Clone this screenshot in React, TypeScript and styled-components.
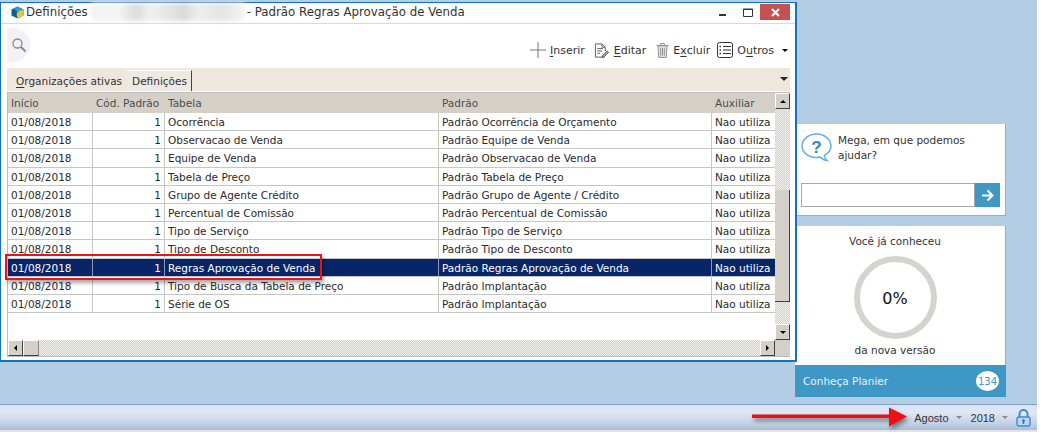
import React from "react";
import styled, { createGlobalStyle, css } from "styled-components";

const GlobalStyle = createGlobalStyle`
  html, body {
    margin: 0;
    padding: 0;
    background: #fff;
  }
  body {
    font-family: "DejaVu Sans", sans-serif;
    font-size: 10.5px;
    color: #222;
    overflow: hidden;
  }
`;

const COLUMNS = "85px 72px 274px 273px 63px";

const checker = css`
  background-color: #f0efec;
  background-image:
    linear-gradient(45deg, #d4d0c8 25%, transparent 25%, transparent 75%, #d4d0c8 75%),
    linear-gradient(45deg, #d4d0c8 25%, transparent 25%, transparent 75%, #d4d0c8 75%);
  background-size: 2px 2px;
  background-position: 0 0, 1px 1px;
`;

const Page = styled.div`
  position: relative;
  width: 1043px;
  height: 434px;
  overflow: hidden;
`;

const Desktop = styled.div`
  display: flex;
  align-items: flex-start;
  width: 1037px;
  height: 402px;
  padding-top: 2px;
  background: #b3cde4;
`;

const Window = styled.div`
  position: relative;
  z-index: 1;
  display: flex;
  flex-direction: column;
  flex: none;
  box-sizing: border-box;
  width: 797px;
  height: 360px;
  padding: 0 5px 3px 6px;
  background: #fff;
  border: 1px solid #1272c0;
  border-width: 1px 2px 2px 1px;
`;

const TitleBar = styled.div`
  display: flex;
  align-items: center;
  flex: none;
  box-sizing: border-box;
  height: 21px;
  margin: 0 -5px 0 -6px;
  padding: 0 5px 2px 10px;
  border-bottom: 1px solid #d9d9d9;
`;

const TitleText = styled.span`
  margin-left: 2px;
  font-size: 11.8px;
  color: #333;
  white-space: nowrap;
`;

const Blurred = styled.span`
  width: 154px;
  height: 18px;
  margin: 0 0 0 3px;
  background: linear-gradient(90deg, #f3f3f3 0 18%, #dcdcdc 30%, #f0f0f0 38%, #e6e6e6 50%, #dadada 60%, #eeeeee 70%, #e4e4e4 85%, #f5f5f5);
  filter: blur(2px);
`;

const WindowControls = styled.div`
  display: flex;
  align-items: center;
  margin-left: auto;
`;

const ControlButton = styled.button<{ $close?: boolean }>`
  display: flex;
  align-items: center;
  justify-content: center;
  width: ${(p) => (p.$close ? "30px" : "25px")};
  height: 16px;
  padding: 0;
  border: 0;
  background: ${(p) => (p.$close ? "#c75050" : "transparent")};
  color: #333;
`;

const Toolbar = styled.div`
  display: flex;
  align-items: center;
  flex: none;
  height: 44px;
`;

const SearchButton = styled.div`
  display: flex;
  align-items: center;
  justify-content: center;
  width: 23px;
  height: 34px;
  margin-top: -3px;
  border-radius: 0 17px 17px 0;
  background: #f3f1f5;
`;

const Actions = styled.div`
  display: flex;
  align-items: center;
  margin-left: auto;
  padding: 8px 2px 0 0;
`;

const Action = styled.div<{ $gap: number }>`
  display: flex;
  align-items: center;
  gap: 4px;
  margin-right: ${(p) => p.$gap}px;
  font-size: 11px;
  color: #333;
`;

const Mnemonic = styled.span`
  text-decoration: underline;
  text-underline-offset: 2px;
`;

const TabBar = styled.div`
  display: flex;
  align-items: flex-end;
  flex: none;
  height: 23px;
  padding-left: 9px;
  background: #efe6dc;
  position: relative;
`;

const Tab = styled.div<{ $active?: boolean }>`
  height: 20px;
  line-height: 21px;
  padding: 0 ${(p) => (p.$active ? "4px" : "5px")} 0 ${(p) => (p.$active ? "5px" : "0")};
  color: #333;
  ${(p) =>
    p.$active &&
    css`
      background: #ede9e3;
      border-right: 1px solid #444;
      border-top: 1px solid #fff;
    `}
`;

const TabMenu = styled.span`
  position: absolute;
  right: 2px;
  top: 9px;
  width: 0;
  height: 0;
  border: 4px solid transparent;
  border-top: 4px solid #222;
  border-bottom: 0;
`;

const Grid = styled.div`
  flex: 1;
  display: grid;
  grid-template-columns: 1fr 15px;
  grid-template-rows: 1fr 16px;
  min-height: 0;
  margin-top: 1px;
  border: 1px solid #bdbdbd;
  border-width: 1px 0 1px 1px;
`;

const TableArea = styled.div`
  display: flex;
  flex-direction: column;
  min-width: 0;
  overflow: hidden;
`;

const HeaderRow = styled.div`
  display: grid;
  grid-template-columns: ${COLUMNS};
  flex: none;
  height: 20px;
  background: #d4d0c8;
  color: #4c4c4c;
  line-height: 21px;
`;

const HeaderCell = styled.div`
  padding: 0 3px;
  white-space: nowrap;
`;

const Row = styled.div<{ $selected?: boolean }>`
  display: grid;
  grid-template-columns: ${COLUMNS};
  flex: none;
  box-sizing: border-box;
  height: 18.2px;
  line-height: 18px;
  border-bottom: 1px solid #c6c6c6;
  color: ${(p) => (p.$selected ? "#fff" : "#2a2a2a")};
  background: ${(p) => (p.$selected ? "#082567" : "#fff")};
`;

const Cell = styled.div<{ $right?: boolean; $selected?: boolean }>`
  padding: 0 3px;
  white-space: nowrap;
  overflow: hidden;
  text-align: ${(p) => (p.$right ? "right" : "left")};
  border-right: 1px solid ${(p) => (p.$selected ? "#8c97b3" : "#c6c6c6")};
  &:last-child {
    border-right: 0;
  }
`;

const VScroll = styled.div`
  display: flex;
  flex-direction: column;
  ${checker}
`;

const HScroll = styled.div`
  display: flex;
  ${checker}
`;

const ScrollButton = styled.div`
  display: flex;
  align-items: center;
  justify-content: center;
  flex: none;
  box-sizing: border-box;
  width: 15px;
  height: 16px;
  background: #d4d0c8;
  border: 1px solid;
  border-color: #fff #404040 #404040 #fff;
`;

const Arrow = styled.span<{ $dir: "up" | "down" | "left" | "right" }>`
  width: 0;
  height: 0;
  border: 3.5px solid transparent;
  ${(p) => (p.$dir === "up" ? "border-top: 0; border-bottom-color: #000;" : "")}
  ${(p) => (p.$dir === "down" ? "border-bottom: 0; border-top-color: #000;" : "")}
  ${(p) => (p.$dir === "left" ? "border-left: 0; border-right-color: #000;" : "")}
  ${(p) => (p.$dir === "right" ? "border-right: 0; border-left-color: #000;" : "")}
`;

const VThumb = styled.div`
  box-sizing: border-box;
  flex: none;
  width: 15px;
  height: 112px;
  margin-top: 81px;
  background: #d4d0c8;
  border-right: 1px solid #404040;
  border-bottom: 1px solid #404040;
`;

const HThumb = styled.div`
  box-sizing: border-box;
  flex: none;
  width: 16px;
  height: 16px;
  background: #d4d0c8;
  border: 1px solid;
  border-color: #fff #8a8a8a #404040 #fff;
`;

const Spacer = styled.div`
  flex: 1;
`;

const Corner = styled.div`
  background: #d4d0c8;
`;

const Side = styled.div`
  display: flex;
  flex-direction: column;
  flex: none;
  gap: 10px;
  width: 211px;
  margin: 122px 0 0 -2px;
`;

const HelpCard = styled.div`
  box-sizing: border-box;
  height: 92px;
  padding: 9px 5px 0 6px;
  background: #fff;
  border-right: 1px solid #a9a9a9;
  border-bottom: 1px solid #a9a9a9;
`;

const HelpHead = styled.div`
  display: flex;
  gap: 6px;
  height: 50px;
`;

const HelpText = styled.div`
  line-height: 15px;
  color: #333;
`;

const HelpField = styled.div`
  display: flex;
  height: 24px;
`;

const HelpInput = styled.div`
  flex: 1;
  box-sizing: border-box;
  background: #fff;
  border: 1px solid #a8a8a8;
`;

const HelpSend = styled.div`
  display: flex;
  align-items: center;
  justify-content: center;
  width: 25px;
  background: #3f97c6;
`;

const VersionCard = styled.div`
  display: flex;
  flex-direction: column;
  height: 171px;
  background: #fff;
  box-sizing: border-box;
`;

const VersionBody = styled.div`
  display: flex;
  flex-direction: column;
  align-items: center;
  flex: 1;
  padding: 9px 10px 0 0;
  border-right: 1px solid #a9a9a9;
  color: #333;
`;

const Gauge = styled.div`
  display: flex;
  align-items: center;
  justify-content: center;
  box-sizing: border-box;
  width: 83px;
  height: 83px;
  margin: 9px 0 5px;
  padding-top: 1px;
  border: 6px solid #d5d3ce;
  border-radius: 50%;
  font-size: 16px;
  color: #111;
`;

const VersionFooter = styled.div`
  display: flex;
  align-items: center;
  justify-content: space-between;
  flex: none;
  height: 32px;
  padding: 0 7px 0 8px;
  background: #3f97c6;
  color: #e6f2f9;
`;

const Badge = styled.span`
  display: flex;
  align-items: center;
  justify-content: center;
  width: 23px;
  height: 20px;
  border-radius: 50%;
  background: #fff;
  color: #3f97c6;
  font-size: 10px;
`;

const Taskbar = styled.div`
  display: flex;
  align-items: center;
  justify-content: flex-end;
  box-sizing: border-box;
  width: 1037px;
  height: 26px;
  padding: 0 6px 0 0;
  border-top: 1px solid #7f9fc6;
  background: linear-gradient(#d9e3f1, #dfe7f3 30%, #c3d1e5 75%, #a9bcd6);
  font-family: "Liberation Sans", sans-serif;
  font-size: 11px;
  color: #333;
`;

const TaskItem = styled.div<{ $gap: number }>`
  display: flex;
  align-items: center;
  gap: 7px;
  margin-right: ${(p) => p.$gap}px;
`;

const SmallCaret = styled.span`
  width: 0;
  height: 0;
  border: 3px solid transparent;
  border-top: 3px solid #888;
  border-bottom: 0;
`;

const BottomEdge = styled.div`
  width: 1037px;
  height: 2px;
  background: #e4e4e4;
`;

const Highlight = styled.div`
  position: absolute;
  z-index: 2;
  left: 5px;
  top: 254px;
  box-sizing: border-box;
  width: 317px;
  height: 26px;
  border: 2px solid #e8141c;
  box-shadow: 2px 3px 4px rgba(0, 0, 0, 0.35);
`;

const Pointer = styled.svg`
  position: absolute;
  z-index: 2;
  left: 748px;
  top: 404px;
  filter: drop-shadow(2px 3px 2px rgba(0, 0, 0, 0.45));
`;

const rows = [
  ["Ocorrência", "Padrão Ocorrência de Orçamento"],
  ["Observacao de Venda", "Padrão Equipe de Venda"],
  ["Equipe de Venda", "Padrão Observacao de Venda"],
  ["Tabela de Preço", "Padrão Tabela de Preço"],
  ["Grupo de Agente  Crédito", "Padrão Grupo de Agente / Crédito"],
  ["Percentual de Comissão", "Padrão Percentual de Comissão"],
  ["Tipo de Serviço", "Padrão Tipo de Serviço"],
  ["Tipo de Desconto", "Padrão Tipo de Desconto"],
  ["Regras Aprovação de Venda", "Padrão Regras Aprovação de Venda"],
  ["Tipo de Busca da Tabela de Preço", "Padrão Implantação"],
  ["Série de OS", "Padrão Implantação"],
];

const SELECTED = 8;

const LogoIcon = () => (
  <svg width="13" height="13" viewBox="0 0 13 13">
    <path d="M6.5 .5 12.500 3.500v6L6.500 12.500.5 9.500v-6z" fill="#0c5f96" />
    <path d="M6.500 .5 12.500 3.500 7 6.500 3 3z" fill="#2b9ed6" />
    <path d="M12.500 3.500v6L6.500 12.500 5.500 8 7 5.500z" fill="#e9c23e" />
  </svg>
);

const SearchIcon = () => (
  <svg width="16" height="16" viewBox="0 0 16 16" fill="none" stroke="#8a8a8a">
    <circle cx="6.5" cy="6.5" r="4.5" strokeWidth="1.3" />
    <path d="m10 10 4.5 4.5" strokeWidth="2" />
  </svg>
);

const PlusIcon = () => (
  <svg width="16" height="16" viewBox="0 0 16 16" stroke="#777" strokeWidth="1">
    <path d="M8 0v16M0 8h16" />
  </svg>
);

const EditIcon = () => (
  <svg width="16" height="17" viewBox="0 0 17 17" fill="none" stroke="#555">
    <path d="M11 13.5V15.5H1.5V1.5h7l3.5 3.5v4M8.500 1.500V5H12" />
    <path d="M3.500 6.500h6M3.500 9h5M3.500 11.500h3" />
    <path d="m9 14 5-5 1.500 1.500-5 5-2 .5z" fill="#aaa" />
  </svg>
);

const TrashIcon = () => (
  <svg width="13" height="17" viewBox="0 0 14 17" fill="#e2e2e2" stroke="#8a8a8a">
    <path d="M.5 3h13M5 3V1h4v2" fill="none" />
    <path d="M2 3.500 3 16h8l1-12.500z" />
    <path d="M5 6v8M7 6v8M9 6v8" fill="none" />
  </svg>
);

const ListIcon = () => (
  <svg width="16" height="16" viewBox="0 0 16 16" fill="none" stroke="#333">
    <rect x=".5" y=".5" width="15" height="15" rx="2" />
    <path d="M6 4.500h8M6 8h8M6 11.500h8" />
    <path d="M2.500 4.500H4M2.500 8H4M2.500 11.500H4" strokeWidth="1.500" />
  </svg>
);

const QuestionIcon = () => (
  <svg width="31" height="29" viewBox="0 0 31 29">
    <path
      d="M15.500 1C7.500 1 1 6.500 1 13c0 6.500 6.500 11.500 14 11.500 1.500 0 3-.2 4-.5 1.500 1.500 4 3.500 7 3.500-1.500-1-2.500-3-2.700-5.200C27.500 20 30 16.800 30 13 30 6.500 23.500 1 15.500 1z"
      fill="#fff"
      stroke="#64aede"
      strokeWidth="1.500"
    />
    <text x="15.500" y="19.500" textAnchor="middle" fontFamily="Liberation Sans, sans-serif" fontWeight="700" fontSize="17" fill="#2d86c6">
      ?
    </text>
  </svg>
);

const SendIcon = () => (
  <svg width="13" height="13" viewBox="0 0 13 13" fill="none" stroke="#fff" strokeWidth="2">
    <path d="M1 6.500h10M6.500 1.500l5 5-5 5" />
  </svg>
);

const LockIcon = () => (
  <svg width="15" height="18" viewBox="0 0 15 18" fill="none" stroke="#3f8ad6">
    <path d="M3.500 8V5a4 4 0 0 1 8 0v3" strokeWidth="2" />
    <rect x="1" y="8" width="13" height="9" rx="2" fill="#bcd6f2" strokeWidth="1.400" />
    <circle cx="7.500" cy="11.500" r="1.300" fill="#2f6fb4" stroke="none" />
    <path d="M7.500 12v3" strokeWidth="1.500" stroke="#2f6fb4" />
  </svg>
);

export default function App() {
  return (
    <Page>
      <GlobalStyle />
      <Desktop>
        <Window>
          <TitleBar>
            <LogoIcon />
            <TitleText>Definições</TitleText>
            <Blurred />
            <TitleText>- Padrão Regras Aprovação de Venda</TitleText>
            <WindowControls>
              <ControlButton>
                <svg width="8" height="8" viewBox="0 0 8 8">
                  <path d="M0 6h7v2H0z" fill="#333" />
                </svg>
              </ControlButton>
              <ControlButton>
                <svg width="10" height="9" viewBox="0 0 10 9" fill="none" stroke="#333">
                  <path d="M.5 1h9v7.500h-9zM.5 1.500h9" />
                </svg>
              </ControlButton>
              <ControlButton $close>
                <svg width="9" height="9" viewBox="0 0 9 9" stroke="#fff" strokeWidth="2">
                  <path d="m1 1 7 7M8 1 1 8" />
                </svg>
              </ControlButton>
            </WindowControls>
          </TitleBar>
          <Toolbar>
            <SearchButton>
              <SearchIcon />
            </SearchButton>
            <Actions>
              <Action $gap={9}>
                <PlusIcon />
                <span>
                  <Mnemonic>I</Mnemonic>nserir
                </span>
              </Action>
              <Action $gap={10}>
                <EditIcon />
                <span>
                  <Mnemonic>E</Mnemonic>ditar
                </span>
              </Action>
              <Action $gap={7}>
                <TrashIcon />
                <span>
                  E<Mnemonic>x</Mnemonic>cluir
                </span>
              </Action>
              <Action $gap={8}>
                <ListIcon />
                <span>
                  O<Mnemonic>u</Mnemonic>tros
                </span>
              </Action>
              <Arrow $dir="down" />
            </Actions>
          </Toolbar>
          <TabBar>
            <Tab>
              <Mnemonic>O</Mnemonic>rganizações ativas
            </Tab>
            <Tab $active>Definições</Tab>
            <TabMenu />
          </TabBar>
          <Grid>
            <TableArea>
              <HeaderRow>
                <HeaderCell>Início</HeaderCell>
                <HeaderCell>Cód. Padrão</HeaderCell>
                <HeaderCell>Tabela</HeaderCell>
                <HeaderCell>Padrão</HeaderCell>
                <HeaderCell>Auxiliar</HeaderCell>
              </HeaderRow>
              {rows.map(([tabela, padrao], i) => (
                <Row key={tabela} $selected={i === SELECTED}>
                  <Cell $selected={i === SELECTED}>01/08/2018</Cell>
                  <Cell $right $selected={i === SELECTED}>
                    1
                  </Cell>
                  <Cell $selected={i === SELECTED}>{tabela}</Cell>
                  <Cell $selected={i === SELECTED}>{padrao}</Cell>
                  <Cell>Nao utiliza</Cell>
                </Row>
              ))}
            </TableArea>
            <VScroll>
              <ScrollButton>
                <Arrow $dir="up" />
              </ScrollButton>
              <VThumb />
              <Spacer />
              <ScrollButton>
                <Arrow $dir="down" />
              </ScrollButton>
            </VScroll>
            <HScroll>
              <ScrollButton>
                <Arrow $dir="left" />
              </ScrollButton>
              <HThumb />
              <Spacer />
              <ScrollButton>
                <Arrow $dir="right" />
              </ScrollButton>
            </HScroll>
            <Corner />
          </Grid>
        </Window>
        <Side>
          <HelpCard>
            <HelpHead>
              <QuestionIcon />
              <HelpText>
                Mega, em que podemos
                <br />
                ajudar?
              </HelpText>
            </HelpHead>
            <HelpField>
              <HelpInput />
              <HelpSend>
                <SendIcon />
              </HelpSend>
            </HelpField>
          </HelpCard>
          <VersionCard>
            <VersionBody>
              <span>Você já conheceu</span>
              <Gauge>0%</Gauge>
              <span>da nova versão</span>
            </VersionBody>
            <VersionFooter>
              <span>Conheça Planier</span>
              <Badge>134</Badge>
            </VersionFooter>
          </VersionCard>
        </Side>
      </Desktop>
      <Taskbar>
        <TaskItem $gap={9}>
          Agosto <SmallCaret />
        </TaskItem>
        <TaskItem $gap={8}>
          2018 <SmallCaret />
        </TaskItem>
        <LockIcon />
      </Taskbar>
      <BottomEdge />
      <Highlight />
      <Pointer width="165" height="30" viewBox="0 0 165 30">
        <path d="M4 10.500h137V3.500l18 9-18 10V14H4z" fill="#ee0f14" />
      </Pointer>
    </Page>
  );
}
